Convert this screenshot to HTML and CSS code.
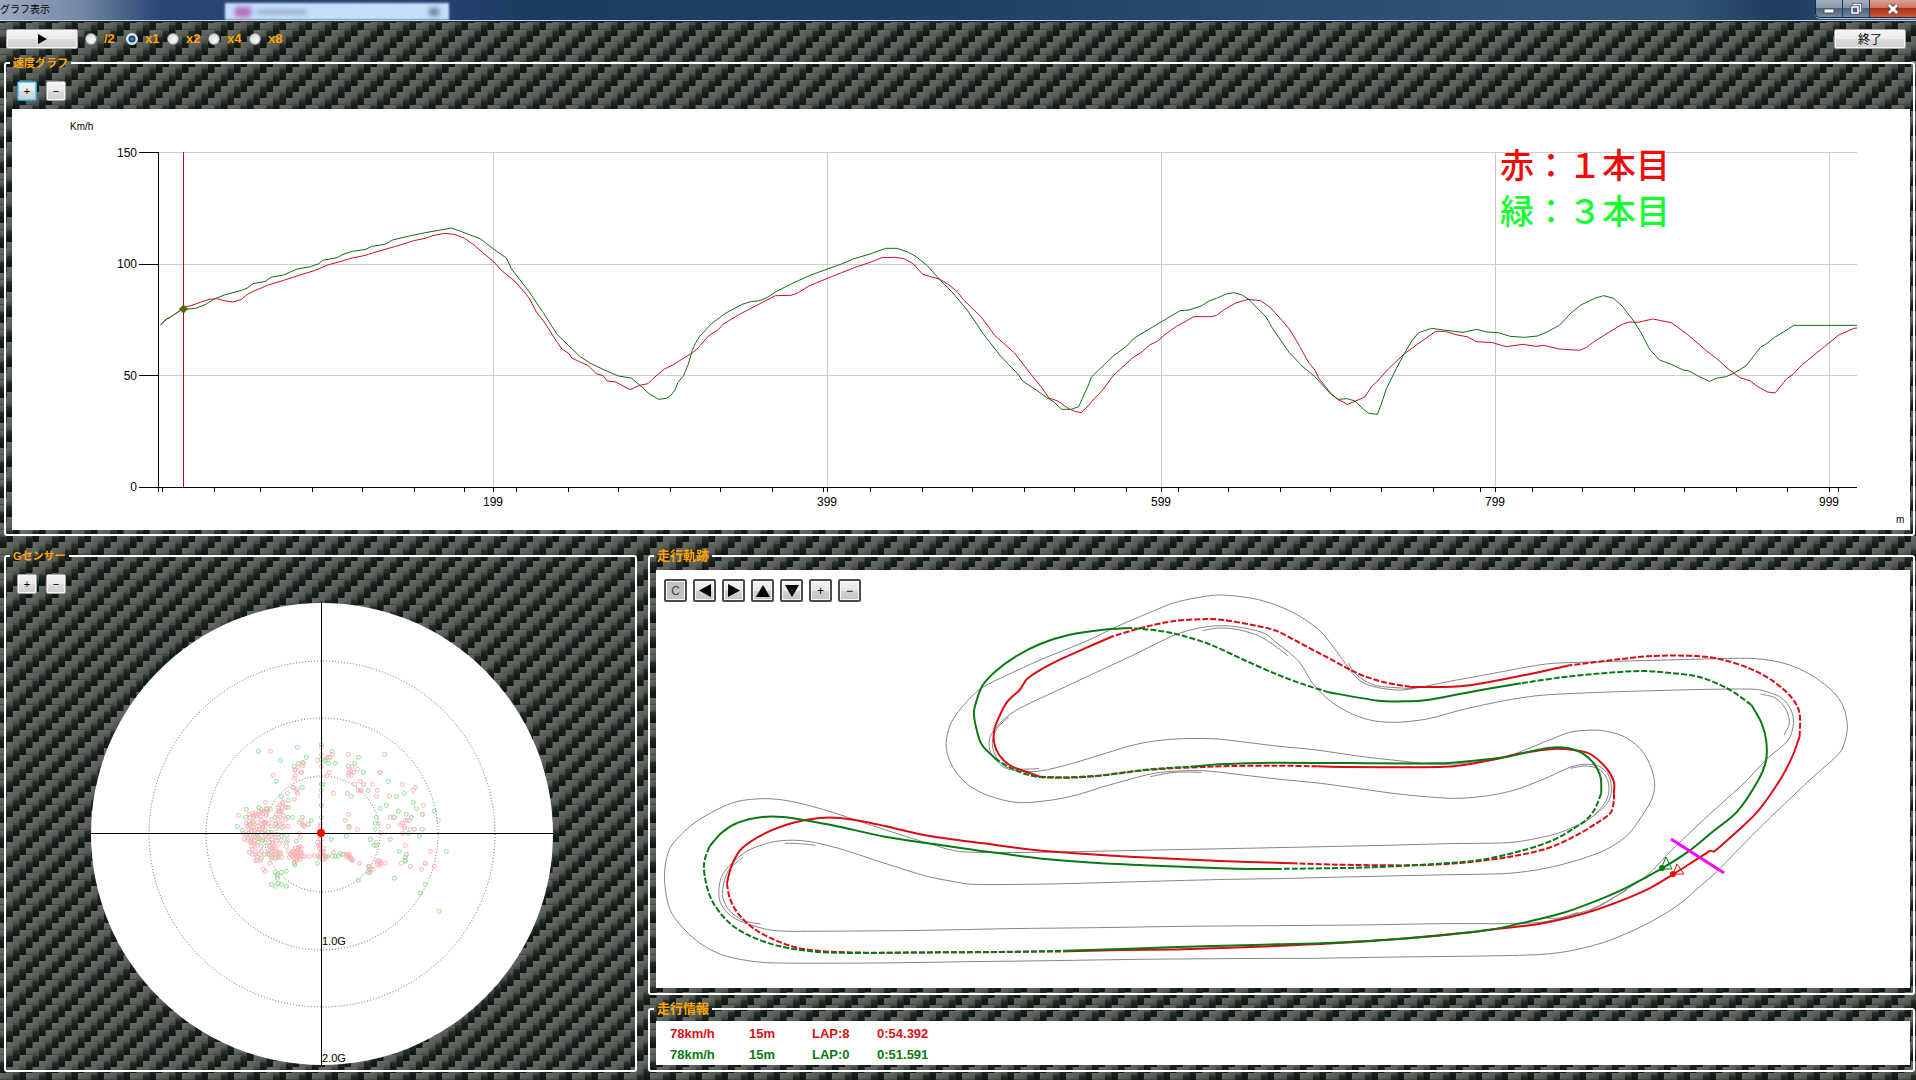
FILE: index.html
```html
<!DOCTYPE html>
<html lang="ja">
<head>
<meta charset="utf-8">
<title>グラフ表示</title>
<link rel="stylesheet" href="styles.css">
<script src="smooth.js" defer></script>
</head>
<body>
<header class="titlebar">
  <h1 class="titlebar-text">グラフ表示</h1>
  <div class="glass-tab" aria-hidden="true"><span class="glass-icon"></span><span class="glass-label"></span><span class="glass-close"></span></div>
  <div class="window-controls">
    <button class="win-btn" aria-label="最小化"><svg width="12" height="12" viewBox="0 0 12 12"><rect x="1" y="6" width="10" height="4" fill="#fff" stroke="#4a5568"/></svg></button>
    <button class="win-btn" aria-label="元に戻す"><svg width="12" height="12" viewBox="0 0 12 12"><g fill="none" stroke="#4a5568" stroke-width="3"><path d="M4 2.500V1.500H10.500V8H9.500"/><rect x="2" y="4" width="6" height="6"/></g><g fill="none" stroke="#fff" stroke-width="1.500"><path d="M4 2.500V1.500H10.500V8H9.500"/><rect x="2" y="4" width="6" height="6"/></g></svg></button>
    <button class="win-btn win-btn-close" aria-label="閉じる"><svg width="12" height="12" viewBox="0 0 12 12"><path d="M2 2L10 10M10 2L2 10" stroke="#5a3a3a" stroke-width="5"/><path d="M2 2L10 10M10 2L2 10" stroke="#fff" stroke-width="3"/></svg></button>
  </div>
</header>
<main class="app">
  <div class="toolbar">
    <button class="btn btn-wide" aria-label="再生"><svg width="9" height="10" viewBox="0 0 9 10"><path d="M0 0L9 5L0 10Z"/></svg></button>
    <div class="rates">
      <label class="rate"><input type="radio" name="rate">/2</label>
      <label class="rate"><input type="radio" name="rate" checked>x1</label>
      <label class="rate"><input type="radio" name="rate">x2</label>
      <label class="rate"><input type="radio" name="rate">x4</label>
      <label class="rate"><input type="radio" name="rate">x8</label>
    </div>
    <button class="btn btn-wide btn-exit">終了</button>
  </div>

  <fieldset class="panel panel-speed">
    <legend class="kana">速度グラフ</legend>
    <div class="zoom-row">
      <button class="btn btn-small btn-focus">+</button>
      <button class="btn btn-small">−</button>
    </div>
    <svg class="plot" viewBox="12 109 1898 421" role="img" aria-label="速度グラフ">
      <path class="grid" d="M159 152.500H1857M159 264.500H1857M159 375.500H1857M493.500 152V487M827.500 152V487M1161.500 152V487M1495.500 152V487M1829.500 152V487"/>
      <path class="axis" d="M158.500 152V492M139 152.500H159M139 264.500H159M139 375.500H159M139 487.500H1857"/>
      <path class="axis" d="M162.500 487v5M214.500 487v5M260.500 487v5M312.500 487v5M362.500 487v5M414.500 487v5M464.500 487v5M493.500 487v5M516.500 487v5M568.500 487v5M618.500 487v5M670.500 487v5M720.500 487v5M772.500 487v5M823.500 487v5M827.500 487v5M870.500 487v5M922.500 487v5M972.500 487v5M1024.500 487v5M1074.500 487v5M1126.500 487v5M1161.500 487v5M1178.500 487v5M1228.500 487v5M1280.500 487v5M1330.500 487v5M1381.500 487v5M1433.500 487v5M1480.500 487v5M1495.500 487v5M1532.500 487v5M1582.500 487v5M1634.500 487v5M1684.500 487v5M1736.500 487v5M1787.500 487v5M1829.500 487v5M1838.500 487v5"/>
      <g class="trace trace-red">
        <polyline transform="translate(100 130) scale(.38265 .33333)" points="158,585 173,567 185,561 205,545 218,533 240,526 262,517 285,508 305,506 325,512 347,516 370,508 385,493 405,482 440,465 480,451 520,436 560,422 595,405 630,394 655,385 690,377 730,363 770,350 820,332 850,325 870,317 900,310 925,313 953,325 980,347 1005,373 1028,394 1048,420 1085,455 1105,481 1122,505 1140,545 1165,583 1185,620 1207,657 1225,670 1234,685 1275,706 1297,731 1315,737 1325,753 1348,756 1385,779 1410,766 1432,761 1445,746 1475,717 1500,703 1530,681 1548,669 1568,649"/>
        <polyline transform="translate(700 200) scale(.38265 .33333)" points="0,437 22,408 48,389 60,373 100,345 140,321 190,291 197,287 238,286 255,279 285,258 333,235 370,218 410,200 440,189 475,173 510,172 533,176 558,192 582,223 600,229 625,237 650,254 672,275 690,301 735,351 770,406 822,459 860,516 893,563 912,594 935,603 965,627 980,634 996,638 1015,617 1030,596 1050,573 1080,527 1130,474 1157,454 1175,435 1195,424 1215,404 1245,379 1260,370 1290,350 1335,350 1350,346 1368,330 1400,309 1432,298 1465,302 1490,322 1520,360 1540,387 1568,440"/>
        <polyline transform="translate(1300 220) scale(.39286 .33333)" points="0,381 22,428 38,450 47,473 78,520 95,538 112,547 120,554 140,544 165,531 182,500 195,486 225,447 265,402 300,372 345,334 370,334 400,345 425,350 450,365 490,368 525,380 568,373 600,379 620,376 660,387 712,391 730,382 745,368 775,345 820,313 838,306 860,307 898,297 920,302 945,308 985,342 1035,393 1060,415 1090,447 1120,473 1145,482 1165,500 1190,516 1209,519 1240,475 1255,463 1278,434 1290,423 1335,380 1370,346 1410,325 1418,324"/>
      </g>
      <g class="trace trace-green">
        <polyline transform="translate(100 130) scale(.38265 .33333)" points="158,585 175,567 185,561 205,545 218,538 250,535 275,524 300,506 325,495 370,481 385,474 400,461 432,454 446,442 480,435 515,417 550,410 572,401 582,391 620,383 635,373 660,364 695,358 710,349 745,343 765,330 800,320 850,308 900,298 918,294 945,305 995,327 1028,357 1062,384 1075,416 1120,483 1160,551 1195,614 1255,680 1280,699 1320,721 1355,738 1388,744 1410,765 1435,791 1460,808 1480,805 1492,796 1503,780 1510,758 1525,737 1537,704 1548,660 1556,640 1568,617"/>
        <polyline transform="translate(700 200) scale(.38265 .33333)" points="0,408 30,371 65,341 110,313 135,304 153,303 175,293 200,274 240,251 290,225 333,207 370,192 400,177 445,162 485,145 515,145 545,157 565,170 595,198 625,237 662,280 700,333 740,401 785,468 830,521 843,543 880,571 905,592 925,606 945,628 970,628 990,620 1003,585 1013,562 1023,531 1062,488 1080,468 1115,438 1135,414 1205,366 1255,332 1278,330 1310,318 1330,303 1350,295 1375,282 1395,278 1415,284 1435,299 1480,352 1495,383 1540,458 1568,491"/>
        <polyline transform="translate(1300 220) scale(.39286 .33333)" points="0,433 38,470 80,524 98,538 120,536 140,543 160,566 175,580 197,583 207,552 220,506 245,446 265,402 285,362 302,338 335,325 365,330 415,337 450,328 475,336 505,338 535,349 570,352 605,348 630,335 660,316 690,279 715,255 750,235 773,227 798,235 820,258 850,304 870,342 890,388 915,420 945,433 975,450 990,453 1015,469 1042,484 1062,474 1085,470 1105,459 1135,438 1172,382 1185,373 1208,352 1232,335 1257,316 1418,316"/>
      </g>
      <path class="cursor" d="M183.500 152V487"/>
      <path class="cursor-dot" d="M183.500 305l4 4-4 4-4-4z"/>
      <text class="unit" x="70" y="130">Km/h</text>
      <text class="unit" x="1896" y="523">m</text>
      <g class="tick-label" text-anchor="end">
        <text x="137" y="157">150</text><text x="137" y="268">100</text><text x="137" y="380">50</text><text x="137" y="491">0</text>
      </g>
      <g class="tick-label" text-anchor="middle">
        <text x="493" y="506">199</text><text x="827" y="506">399</text><text x="1161" y="506">599</text><text x="1495" y="506">799</text><text x="1829" y="506">999</text>
      </g>
      <text class="note note-red" x="1500" y="178">赤：１本目</text>
      <text class="note note-green" x="1500" y="224">緑：３本目</text>
    </svg>
  </fieldset>

  <div class="lower">
    <fieldset class="panel panel-g">
      <legend class="kana">Gセンサー</legend>
      <div class="zoom-row">
        <button class="btn btn-small">+</button>
        <button class="btn btn-small">−</button>
      </div>
      <svg class="gauge" viewBox="12 599 617 471" role="img" aria-label="Gセンサー">
        <defs>
          <marker id="dot-red" viewBox="-8 -8 16 16" markerWidth="16" markerHeight="16" markerUnits="userSpaceOnUse"><circle r="6" fill="none" stroke="#ffb0b8" stroke-width="3"/></marker>
          <marker id="dot-green" viewBox="-8 -8 16 16" markerWidth="16" markerHeight="16" markerUnits="userSpaceOnUse"><circle r="6" fill="none" stroke="#90e090" stroke-width="3"/></marker>
        </defs>
        <circle cx="322" cy="834" r="231" fill="#fff"/>
        <g class="ring"><circle cx="322" cy="834" r="58"/><circle cx="322" cy="834" r="116"/><circle cx="322" cy="834" r="173"/></g>
        <g transform="translate(200 720) scale(.33333)">
          <polyline class="dots-green" points="175,94 292,82 364,74 395,94 241,121 283,139 295,130 308,127 319,112 364,118 376,118 390,112 386,130 406,130 375,124 445,139 464,130 475,112 490,157 553,103 565,184 539,157 229,184 307,202 279,202 364,193 369,193 364,211 364,256 244,229 265,241 491,193 505,211 454,229 613,220 589,229 640,247 649,265 559,256 541,265 595,274 703,274 667,283 619,283 634,292 529,292 526,310 526,328 583,292 139,268 176,262 183,268 199,268 200,265 137,292 160,292 112,319 148,313 160,307 235,262 265,262 240,274 225,292 264,292 278,292 307,292 334,301 364,292 299,307 325,313 227,313 233,319 247,322 187,322 196,310 176,337 187,337 145,340 154,334 127,331 205,337 215,337 232,343 245,349 260,346 175,352 187,361 196,367 175,367 154,364 205,349 163,361 289,364 259,367 217,367 226,352 394,358 439,349 511,358 523,376 529,376 571,358 598,394 625,340 643,328 667,328 658,349 739,394 447,319 447,322 415,409 406,409 421,400 430,403 397,409 376,409 382,409 364,394 370,385 352,430 205,403 214,394 223,403 226,415 229,403 217,411 241,397 235,412 184,415 283,430 284,435 289,421 271,403 280,394 208,379 301,397 295,409 358,412 454,415 457,421 508,439 508,447 504,457 510,457 616,412 619,403 616,421 616,424 676,430 583,475 475,481 676,493 661,520 718,574 226,457 244,457 259,454 232,463 232,469 232,475 214,493 226,499 235,490 244,493 259,499"/>
          <polyline class="dots-red" points="211,94 364,82 364,103 397,103 445,103 382,112 388,112 352,121 310,130 308,137 293,142 286,148 284,151 303,157 305,157 286,167 283,175 220,166 364,139 388,157 380,167 457,139 448,148 452,154 472,148 446,160 454,166 445,166 461,157 541,157 481,184 463,193 490,193 517,193 607,193 646,202 640,211 670,256 715,301 667,283 280,202 292,208 290,214 293,220 262,220 283,238 361,229 400,220 442,220 481,211 475,211 484,211 532,211 529,229 568,229 364,256 196,247 247,250 240,256 250,247 256,262 247,262 259,262 115,286 157,280 166,280 151,292 148,283 160,292 178,274 184,274 193,274 202,274 211,268 190,280 199,286 181,289 169,289 163,286 175,283 235,274 244,274 229,283 238,274 250,286 241,292 226,310 214,298 235,298 258,298 247,310 253,319 265,319 241,313 229,325 214,319 205,310 196,319 196,307 190,307 184,313 184,301 178,319 172,307 163,313 160,322 154,310 148,304 142,319 139,310 145,325 154,328 163,331 169,328 178,328 187,328 193,331 172,337 139,343 130,340 133,358 145,355 154,358 160,349 151,346 166,352 172,346 181,358 190,355 199,343 205,352 214,343 223,343 217,358 229,361 244,361 238,370 142,361 151,367 160,370 154,379 163,376 172,376 184,379 148,397 157,388 166,394 157,403 166,403 172,409 178,403 184,394 193,403 202,400 172,421 166,421 181,421 208,430 190,448 196,454 208,367 211,376 217,370 223,376 217,385 223,388 211,388 226,394 217,397 214,406 229,403 235,409 241,403 229,412 244,412 214,415 220,379 229,385 235,397 259,379 265,394 271,403 268,412 277,409 283,403 286,397 292,391 286,385 295,385 301,379 304,385 298,397 295,403 289,409 283,415 298,412 301,406 307,409 292,415 313,409 328,409 343,406 277,397 292,400 304,397 295,391 286,406 289,421 283,427 301,418 295,382 262,361 235,352 298,340 301,352 307,313 313,319 304,301 310,316 325,313 361,319 364,328 361,313 445,283 436,301 447,320 472,328 361,358 352,367 355,376 361,379 358,385 361,376 364,391 367,397 361,403 370,403 376,409 364,409 373,409 361,412 367,418 373,418 379,412 355,409 364,364 370,394 400,397 427,403 439,403 445,403 448,409 445,412 451,415 454,418 457,421 448,403 439,409 478,430 505,439 511,448 519,448 505,454 532,424 538,430 544,430 532,433 541,424 556,430 538,436 535,421 535,310 544,340 565,319 571,292 580,292 607,310 601,313 613,319 616,301 628,301 622,301 613,325 631,328 643,328 607,340 529,367 616,376 691,394 604,430 619,403 631,439 664,448 676,430 703,439"/>
        </g>
        <path class="axis" d="M91 833.500H553M321.500 601V1065"/>
        <circle cx="321" cy="833" r="4" fill="#f00"/>
        <text class="g-label" x="322" y="945">1.0G</text>
        <text class="g-label" x="322" y="1062">2.0G</text>
      </svg>
    </fieldset>

    <div class="right">
      <fieldset class="panel panel-track">
        <legend>走行軌跡</legend>
        <div class="track-view">
          <div class="track-buttons">
            <button class="btn btn-track btn-pressed">C</button>
            <button class="btn btn-track" aria-label="左"><svg width="12" height="13" viewBox="0 0 12 13"><path d="M12 0V13L0 6.500Z"/></svg></button>
            <button class="btn btn-track" aria-label="右"><svg width="12" height="13" viewBox="0 0 12 13"><path d="M0 0V13L12 6.500Z"/></svg></button>
            <button class="btn btn-track" aria-label="上"><svg width="14" height="12" viewBox="0 0 14 12"><path d="M0 12H14L7 0Z"/></svg></button>
            <button class="btn btn-track" aria-label="下"><svg width="14" height="12" viewBox="0 0 14 12"><path d="M0 0H14L7 12Z"/></svg></button>
            <button class="btn btn-track">+</button>
            <button class="btn btn-track">−</button>
          </div>
          <svg class="plot" viewBox="656 570 1254 418" role="img" aria-label="走行軌跡">
            <g transform="translate(640 540) scale(.40816 .33333)">
              <g class="course">
                <polygon points="1423,165 1370,172 1310,188 1250,217 1160,264 1100,300 980,360 900,405 842,440 812,470 780,515 760,555 750,610 758,660 780,705 810,740 850,765 900,783 940,788 1010,780 1070,765 1130,742 1200,718 1260,700 1320,693 1390,693 1470,704 1568,718 1668,730 1858,762 1958,773 2008,775 2078,767 2128,755 2178,735 2228,710 2278,682 2313,673 2348,678 2373,705 2380,750 2370,790 2328,835 2298,855 2248,880 2198,895 2128,908 1978,911 1858,915 1558,923 1180,932 980,937 820,937 770,932 720,915 640,885 540,845 480,820 400,792 350,780 300,776 240,784 190,808 130,852 80,912 65,955 60,1010 65,1070 78,1120 110,1170 150,1212 200,1244 260,1261 330,1269 590,1269 800,1265 1010,1262 1220,1258 1568,1255 1648,1255 1858,1251 2068,1248 2198,1244 2258,1237 2318,1222 2378,1200 2458,1157 2538,1100 2598,1038 2638,995 2738,870 2866,720 2938,640 2953,600 2958,555 2948,500 2923,455 2878,412 2828,380 2778,363 2718,355 2608,357 2518,360 2358,365 2238,370 2178,380 2078,403 1988,423 1928,438 1868,450 1818,445 1778,432 1753,410 1728,370 1698,320 1668,275 1618,230 1558,195 1500,175"/>
                <polygon points="1558,307 1530,280 1480,264 1425,257 1370,264 1310,285 1200,350 1060,430 930,505 890,540 862,580 855,610 862,645 890,680 920,692 980,693 1060,670 1140,640 1220,612 1300,598 1400,596 1480,606 1558,618 1658,630 1758,648 1858,662 1938,672 1998,672 2058,663 2118,652 2168,630 2228,600 2278,577 2318,571 2358,572 2408,588 2448,623 2473,670 2486,730 2478,780 2448,840 2418,887 2368,928 2298,960 2218,985 2128,1000 1988,1004 1758,1010 1558,1016 1440,1018 1220,1025 1000,1032 815,1033 760,1023 700,1008 600,970 500,930 430,908 385,901 340,903 300,914 260,935 225,970 200,1010 193,1060 200,1095 225,1130 265,1152 320,1170 380,1174 700,1171 900,1166 1120,1163 1330,1159 1558,1157 1758,1155 1968,1151 2118,1151 2198,1148 2248,1137 2298,1120 2348,1100 2408,1055 2468,1005 2528,930 2608,837 2713,720 2758,660 2813,600 2826,550 2820,510 2798,475 2768,458 2733,448 2618,448 2398,455 2258,462 2198,467 2118,482 2018,508 1928,537 1848,547 1788,540 1733,515 1688,480 1648,430 1618,370 1588,335"/>
                <polyline points="1378,272 1420,264 1470,270 1520,290 1558,320 1588,348"/>
                <polyline points="903,532 875,565 863,610 875,655 905,685 978,686"/>
                <polyline points="1250,710 1310,697 1375,697"/>
                <polyline points="1736,370 1748,395 1773,420 1808,438 1893,446"/>
                <polyline points="2745,462 2783,475 2808,510 2816,550 2803,585"/>
                <polyline points="2280,685 2318,678 2353,690 2373,730 2368,780 2338,825"/>
                <polyline points="355,910 390,911 430,916"/>
                <polyline points="252,952 215,995 202,1060 215,1105 250,1140 295,1152"/>
                <polyline points="2223,1135 2258,1133 2298,1117"/>
                <polyline points="2328,1110 2368,1085 2418,1050"/>
              </g>
              <g class="line line-red">
                <polyline points="1160,288 1100,320 1010,370 950,415 930,450 900,485 880,530 868,570 868,610 880,645 905,675 940,693 980,710"/>
                <polyline class="dash" points="980,710 1050,713 1120,708 1200,695 1300,685 1380,681 1450,678 1558,677 1660,679"/>
                <polyline points="1660,679 1730,681 1958,681 2018,675 2098,657 2158,640 2238,627 2288,630 2328,642 2368,685 2386,725 2386,760"/>
                <polyline class="dash" points="2386,760 2386,780 2378,818 2343,850 2288,890 2218,927 2118,953 1998,970 1888,976 1708,974 1600,970"/>
                <polyline points="1600,970 1558,968 1420,963 1200,950 1000,934 840,910 710,888 600,858 550,845 490,834 440,834 380,847 310,878 250,925 225,975 213,1030"/>
                <polyline class="dash" points="213,1030 220,1075 240,1120 280,1167 340,1205 400,1227 480,1236 590,1238 850,1236 1050,1234"/>
                <polyline points="1050,1234 1180,1230 1330,1228 1558,1218 1698,1210 1858,1197 2008,1180 2098,1167 2198,1153 2278,1132 2348,1107 2418,1075 2478,1042 2531,1003 2580,965 2622,932"/>
                <polyline points="2622,932 2632,934 2678,885 2738,815 2793,720 2823,650 2841,590"/>
                <polyline class="dash" points="2841,590 2841,520 2823,475 2778,425 2718,385 2648,358 2588,348 2478,348 2398,358 2278,376"/>
                <polyline points="2278,376 2168,405 2038,435 1988,440 1888,441"/>
                <polyline class="dash" points="1888,441 1818,425 1758,400 1688,355 1618,310 1558,272 1500,255 1430,240 1390,237 1310,243 1240,260 1160,288"/>
              </g>
              <g class="line line-green">
                <polyline points="1200,264 1130,270 1050,285 980,312 920,350 870,395 840,435 825,480 818,520 825,570 838,615 870,655"/>
                <polyline class="dash" points="870,655 910,685 970,710 1050,712 1150,704 1250,688 1350,680"/>
                <polyline points="1350,680 1420,673 1558,668 1958,670 2058,660 2118,652 2198,630 2248,622 2298,633 2333,665 2353,710 2355,760"/>
                <polyline class="dash" points="2355,760 2338,810 2318,840 2288,865 2238,900 2158,933 2058,960 1958,971 1788,982 1558,987"/>
                <polyline points="1558,987 1460,986 1300,979 1130,970 1000,958 850,935 720,912 600,890 480,858 400,840 350,831 300,831 240,848 200,878 170,920"/>
                <polyline class="dash" points="170,920 157,970 162,1030 180,1090 220,1150 270,1188 340,1218 420,1234 480,1238 560,1239 720,1237 900,1236 1040,1232"/>
                <polyline points="1040,1232 1200,1226 1400,1218 1558,1213 1698,1208 1898,1193 2078,1170 2158,1150 2258,1120 2358,1075 2418,1042 2504,985 2568,935 2628,875 2688,815 2740,720 2759,660 2759,600 2748,550 2723,495"/>
                <polyline class="dash" points="2723,495 2668,448 2598,412 2518,398 2448,393 2358,400 2258,412 2158,430"/>
                <polyline points="2158,430 2038,455 1928,480 1878,484 1808,482 1688,457"/>
                <polyline class="dash" points="1688,457 1618,430 1558,402 1480,360 1400,315 1330,287 1270,272 1200,264"/>
              </g>
            </g>
            <path d="M1671 839L1724 873" stroke="#f0f" stroke-width="3"/>
            <path d="M1666 857L1661 869H1672Z" fill="none" stroke="#008000"/><circle cx="1662" cy="868" r="3" fill="#008000"/>
            <path d="M1677 864L1673 874H1684Z" fill="none" stroke="#e00"/><circle cx="1673" cy="874" r="3" fill="#f00"/>
          </svg>
        </div>
      </fieldset>

      <fieldset class="panel panel-info">
        <legend>走行情報</legend>
        <div class="info">
          <table class="info-table">
            <tr class="row-red"><td>78km/h</td><td>15m</td><td>LAP:8</td><td>0:54.392</td></tr>
            <tr class="row-green"><td>78km/h</td><td>15m</td><td>LAP:0</td><td>0:51.591</td></tr>
          </table>
        </div>
      </fieldset>
    </div>
  </div>
</main>
</body>
</html>
```
FILE: styles.css
```css
* { box-sizing: border-box; }

body {
  margin: 0;
  min-height: 100vh;
  font-family: "Liberation Sans", "Noto Sans CJK JP", sans-serif;
  font-size: 12px;
  color: #000;
  background-color: #444844;
  background-image: url("data:image/svg+xml,%3Csvg xmlns='http://www.w3.org/2000/svg' width='26' height='25'%3E%3Cdefs%3E%3ClinearGradient id='g' x2='1' y2='1'%3E%3Cstop stop-color='%236a6e68'/%3E%3Cstop offset='.5' stop-color='%235e625d'/%3E%3Cstop offset='1' stop-color='%23484c48'/%3E%3C/linearGradient%3E%3ClinearGradient id='d' x2='0' y2='1'%3E%3Cstop stop-color='%232c342f'/%3E%3Cstop offset='.5' stop-color='%23151e19'/%3E%3Cstop offset='1' stop-color='%230e1612'/%3E%3C/linearGradient%3E%3C/defs%3E%3Crect width='26' height='25' fill='%23434844'/%3E%3Cg fill='url(%23g)'%3E%3Crect y='23' width='13' height='6'/%3E%3Crect y='-2' width='13' height='6'/%3E%3Crect x='6.5' y='17' width='13' height='6'/%3E%3Crect x='13' y='11' width='13' height='6'/%3E%3Crect x='19.5' y='5' width='13' height='6'/%3E%3Crect x='-6.5' y='5' width='13' height='6'/%3E%3C/g%3E%3Cg fill='url(%23d)'%3E%3Crect y='12' width='6.5' height='11' rx='1'/%3E%3Crect x='6.5' y='6' width='6.5' height='11' rx='1'/%3E%3Crect x='13' y='0' width='6.5' height='11' rx='1'/%3E%3Crect x='19.5' y='-6' width='6.5' height='11' rx='1'/%3E%3Crect x='19.5' y='19' width='6.5' height='11' rx='1'/%3E%3C/g%3E%3C/svg%3E");
}

button { font: inherit; padding: 0; cursor: pointer; }

/* Title bar */
.titlebar {
  display: flex;
  align-items: flex-start;
  height: 21px;
  border-bottom: 1px solid #c8d4e0;
  background:
    linear-gradient(90deg, #9aa9bd 0, #7488a5 80px, #2a4573 160px, #27406f 450px, #1b3c60 520px, #1f4166 960px, #2f5478 1500px, #335577 1680px, #1e3b60 1780px, #3b5e83 100%);
  box-shadow: 0 1px 0 #1a2a3a;
}
.titlebar-text {
  margin: 0;
  width: 225px;
  font-size: 10px;
  line-height: 20px;
  font-weight: 400;
}
.glass-tab {
  display: flex;
  align-items: center;
  gap: 6px;
  width: 224px;
  height: 17px;
  margin-top: 3px;
  padding: 0 10px;
  background: #c6ddfb;
  filter: blur(1px);
}
.glass-icon { width: 16px; height: 10px; background: #b56fc0; filter: blur(2px); }
.glass-label { width: 50px; height: 4px; background: #8ea3c4; filter: blur(2px); }
.glass-close { width: 10px; height: 8px; margin-left: auto; background: #71839f; filter: blur(2px); }
.window-controls {
  display: flex;
  margin-left: auto;
  height: 18px;
  border: 1px solid #1a2c44;
  border-top: 0;
  border-right: 0;
  border-radius: 0 0 0 5px;
  overflow: hidden;
  box-shadow: 0 1px 0 #a9bacb;
}
.win-btn {
  display: flex;
  align-items: center;
  justify-content: center;
  width: 27px;
  border: 0;
  border-right: 1px solid #24364c;
  background: linear-gradient(#a3b0bf, #8796a8 45%, #4d6179 50%, #7189a3);
}
.win-btn-close { width: 46px; border-right: 0; background: linear-gradient(#dba093, #cf7464 45%, #b32d18 50%, #c95c3c); }

/* Toolbar */
.toolbar {
  display: flex;
  align-items: center;
  height: 35px;
  padding: 0 10px 0 6px;
}
.rates { display: flex; margin-left: 7px; }
.rate {
  display: flex;
  align-items: center;
  gap: 7px;
  width: 41px;
  color: #ffa500;
  font-size: 13px;
  font-weight: 700;
}
.rate input {
  appearance: none;
  flex: none;
  width: 12px;
  height: 12px;
  margin: 0;
  border: 1px solid #8e8f8f;
  border-radius: 50%;
  background: radial-gradient(circle at 60% 60%, #fdfdfd, #c4c8cc);
  box-shadow: 0 0 0 1px #e6e6e6 inset;
}
.rate input:checked {
  border-color: #e8f0f6;
  background: radial-gradient(circle, #49a3dc 0, #1b5f9c 2px, #17334d 3px, #d6e4ee 4px);
}

/* Buttons */
.btn {
  display: flex;
  align-items: center;
  justify-content: center;
  color: #000;
  border: 1px solid #a5a5a5;
  border-radius: 2px;
  background: linear-gradient(#f2f2f2, #ebebeb 50%, #dcdcdc 51%, #cecece);
  box-shadow: inset 0 0 0 1px #f8f8f8;
}
.btn-wide { width: 72px; height: 20px; }
.btn-exit { margin-left: auto; }
.btn-small { width: 20px; height: 20px; line-height: 16px; font-size: 11px; }
.btn-focus { border-color: #3c9fc8; box-shadow: inset 0 0 0 1px #5fd0f4; }
.btn-track {
  width: 23px;
  height: 23px;
  border: 2px solid #4a4c4a;
  background: linear-gradient(#f2f2f2, #e6e6e6 50%, #d2d2d2 51%, #c4c4c4);
}
.btn-pressed { background: #c2c2c2; color: #444; }

/* Group boxes */
.panel {
  min-width: 0;
  margin: 0;
  border: 2px solid #fff;
  border-radius: 3px;
}
.panel legend {
  margin-left: -2px;
  padding: 0 3px;
  height: 14px;
  line-height: 14px;
  font-size: 13px;
  font-weight: 700;
  color: #ffa500;
}
.panel legend.kana { font-size: 11px; }
.zoom-row { display: flex; gap: 9px; margin-left: 5px; }
.plot { display: block; width: 100%; height: auto; background: #fff; }

.panel-speed { margin: 0 1px 0 4px; padding: 11px 3px 4px 6px; }
.panel-speed .zoom-row { margin-bottom: 8px; }

.lower {
  display: grid;
  grid-template-columns: minmax(0, 633fr) minmax(0, 1267fr);
  gap: 11px;
  margin: 13px 1px 8px 4px;
}
.panel-g { padding: 11px 6px 0; }
.panel-g .zoom-row { margin-bottom: 5px; }
.gauge { display: block; width: 100%; height: auto; }
.right { display: flex; flex-direction: column; gap: 7px; }
.panel-track { padding: 7px 3px 5px 6px; }
.track-view { position: relative; }
.track-buttons {
  position: absolute;
  top: 9px;
  left: 8px;
  display: flex;
  gap: 6px;
}
.panel-info { padding: 5px 3px 5px 6px; }
.info { height: 44px; padding: 2px 14px 0; background: #fff; }
.info-table { border-collapse: collapse; font-size: 13px; font-weight: 700; }
.info-table td { height: 21px; padding: 0; line-height: 21px; }
.info-table td:nth-child(1) { width: 79px; }
.info-table td:nth-child(2) { width: 63px; }
.info-table td:nth-child(3) { width: 65px; }
.row-red { color: #dc0f14; }
.row-green { color: #0a7814; }

/* Speed graph */
.grid { stroke: #cdcdcd; fill: none; }
.axis { stroke: #000; fill: none; }
.trace { fill: none; stroke-width: 1; }
.trace polyline { vector-effect: non-scaling-stroke; }
.trace-red { stroke: #c81420; }
.trace-green { stroke: #107018; }
.cursor { stroke: #b40f1e; }
.cursor-dot { fill: #4a6a00; stroke: #4a6a00; stroke-width: 1; }
.unit { font-size: 10px; }
.tick-label { font-size: 12px; }
.note { font-family: "Noto Sans CJK JP", sans-serif; font-size: 34px; font-weight: 500; }
.note-red { fill: #f00a0a; }
.note-green { fill: #14ff32; }

/* G sensor */
.ring { fill: none; stroke: #666; stroke-dasharray: 1 2; }
.dots-red { fill: none; stroke: none; marker: url(#dot-red); }
.dots-green { fill: none; stroke: none; marker: url(#dot-green); }
.g-label { font-size: 11px; }

/* Course map */
.course { fill: none; stroke: #858585; }
.line { fill: none; stroke-width: 2; }
.course *, .line * { vector-effect: non-scaling-stroke; }
.line .dash { stroke-dasharray: 6 2; }
.line-red { stroke: #dc0a14; }
.line-green { stroke: #0a7814; }
```
FILE: smooth.js
```js
// Draws the course outline and the driven lines as smooth curves through their sample points.
for (const shape of document.querySelectorAll(".course polygon, .course polyline, .line polyline")) {
  const pts = shape.getAttribute("points").trim().split(/\s+/).map(p => p.split(",").map(Number));
  const closed = shape.tagName === "polygon";
  const n = pts.length;
  const at = i => closed ? pts[(i + n) % n] : pts[Math.max(0, Math.min(n - 1, i))];
  let d = "M" + pts[0];
  for (let i = 0; i < (closed ? n : n - 1); i++) {
    const [a, b, c, e] = [at(i - 1), at(i), at(i + 1), at(i + 2)];
    const len = Math.hypot(c[0] - b[0], c[1] - b[1]);
    // Handles follow the neighbouring points but never outgrow the segment.
    const handle = (from, to) => {
      const l = Math.hypot(to[0] - from[0], to[1] - from[1]) || 1;
      const k = Math.min(1 / 6, len / 3 / l);
      return [(to[0] - from[0]) * k, (to[1] - from[1]) * k];
    };
    const h1 = handle(a, c);
    const h2 = handle(b, e);
    d += `C${b[0] + h1[0]},${b[1] + h1[1]} ${c[0] - h2[0]},${c[1] - h2[1]} ${c}`;
  }
  const path = document.createElementNS("http://www.w3.org/2000/svg", "path");
  path.setAttribute("d", d);
  path.setAttribute("class", shape.getAttribute("class") || "");
  shape.replaceWith(path);
}
```
